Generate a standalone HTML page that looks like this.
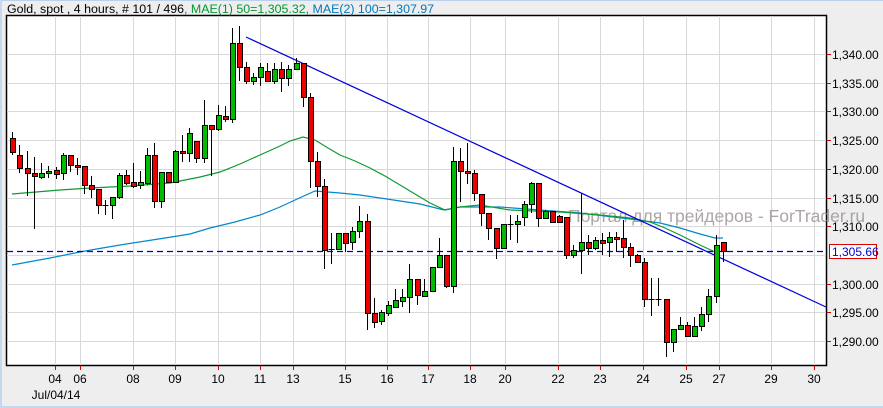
<!DOCTYPE html>
<html><head><meta charset="utf-8"><style>
html,body{margin:0;padding:0;width:883px;height:408px;overflow:hidden;background:#eeeeee;font-family:"Liberation Sans",Arial,sans-serif;}
#wrap{position:relative;width:883px;height:408px;}
svg{position:absolute;left:0;top:0}
</style></head><body><div id="wrap">
<svg width="883" height="408" xmlns="http://www.w3.org/2000/svg" font-family="Liberation Sans, Arial, sans-serif">
<rect x="0" y="0" width="883" height="408" fill="#eeeeee"/>
<rect x="0" y="0" width="883" height="1" fill="#b9d1ea"/>
<rect x="0" y="0" width="2" height="408" fill="#c4d8ee"/>
<rect x="0" y="406" width="883" height="2" fill="#c4d8ee"/>
<rect x="6.5" y="15.5" width="820" height="350" fill="#fff" stroke="#000" stroke-width="1.5"/>
<g stroke="#d8d8d8" stroke-width="1" id="grid">
<line x1="7" x2="826" y1="54.5" y2="54.5"/><line x1="7" x2="826" y1="83.5" y2="83.5"/><line x1="7" x2="826" y1="111.5" y2="111.5"/><line x1="7" x2="826" y1="140.5" y2="140.5"/><line x1="7" x2="826" y1="169.5" y2="169.5"/><line x1="7" x2="826" y1="198.5" y2="198.5"/><line x1="7" x2="826" y1="226.5" y2="226.5"/><line x1="7" x2="826" y1="255.5" y2="255.5"/><line x1="7" x2="826" y1="284.5" y2="284.5"/><line x1="7" x2="826" y1="312.5" y2="312.5"/><line x1="7" x2="826" y1="341.5" y2="341.5"/>
<line y1="16" y2="365" x1="55.5" x2="55.5"/><line y1="16" y2="365" x1="80.5" x2="80.5"/><line y1="16" y2="365" x1="133.5" x2="133.5"/><line y1="16" y2="365" x1="175.5" x2="175.5"/><line y1="16" y2="365" x1="218.5" x2="218.5"/><line y1="16" y2="365" x1="260.5" x2="260.5"/><line y1="16" y2="365" x1="293.5" x2="293.5"/><line y1="16" y2="365" x1="345.5" x2="345.5"/><line y1="16" y2="365" x1="387.5" x2="387.5"/><line y1="16" y2="365" x1="428.5" x2="428.5"/><line y1="16" y2="365" x1="470.5" x2="470.5"/><line y1="16" y2="365" x1="505.5" x2="505.5"/><line y1="16" y2="365" x1="558.5" x2="558.5"/><line y1="16" y2="365" x1="600.5" x2="600.5"/><line y1="16" y2="365" x1="643.5" x2="643.5"/><line y1="16" y2="365" x1="686.5" x2="686.5"/><line y1="16" y2="365" x1="719.5" x2="719.5"/><line y1="16" y2="365" x1="771.5" x2="771.5"/><line y1="16" y2="365" x1="814.5" x2="814.5"/>
</g>
<text x="568" y="222" font-size="17.5" fill="#9a8f8f" fill-opacity="0.8">Портал для трейдеров - ForTrader.ru</text>
<polyline fill="none" stroke="#0088cc" stroke-width="1.2" points="12,265 50,258 85,251 120,245 165,238 190,234 210,228 235,222 260,215 280,207 295,200 315,191 340,193 360,195 380,198 400,201 420,204 444,210 460,207 500,207 540,210 580,213 630,219 660,223 680,228 700,234 715,238 723,238"/>
<polyline fill="none" stroke="#119933" stroke-width="1.2" points="12,194 60,190 90,188 130,186 170,183 200,177 220,172 240,164 260,155 280,146 290,141 303,137 315,140 328,148 340,155 355,161 370,168 385,176 400,185 415,194 430,203 445,210 460,207 480,205 510,210 560,212 600,215 630,218 650,222 665,228 680,235 700,245 715,252"/>
<line x1="246" y1="37" x2="826" y2="307" stroke="#0000dd" stroke-width="1.2"/>
<line x1="7" y1="251.5" x2="826" y2="251.5" stroke="#0000cc" stroke-width="1.3" stroke-dasharray="6,4"/>
<g id="candles" stroke="#000" stroke-width="1"></g>
<g fill="#000" font-size="12.4">
<text x="7" y="13">Gold, spot , 4 hours, # 101 / 496<tspan fill="#009933">, MAE(1) 50=1,305.32</tspan><tspan fill="#0077bb">, MAE(2) 100=1,307.97</tspan></text>
</g>
<g stroke="#dd0000" stroke-width="1">
<line x1="827" x2="831" y1="54.5" y2="54.5"/><line x1="827" x2="831" y1="83.5" y2="83.5"/><line x1="827" x2="831" y1="111.5" y2="111.5"/><line x1="827" x2="831" y1="140.5" y2="140.5"/><line x1="827" x2="831" y1="169.5" y2="169.5"/><line x1="827" x2="831" y1="198.5" y2="198.5"/><line x1="827" x2="831" y1="226.5" y2="226.5"/><line x1="827" x2="831" y1="284.5" y2="284.5"/><line x1="827" x2="831" y1="312.5" y2="312.5"/><line x1="827" x2="831" y1="341.5" y2="341.5"/>
<line y1="366" y2="370" x1="55.5" x2="55.5"/><line y1="366" y2="370" x1="80.5" x2="80.5"/><line y1="366" y2="370" x1="133.5" x2="133.5"/><line y1="366" y2="370" x1="175.5" x2="175.5"/><line y1="366" y2="370" x1="218.5" x2="218.5"/><line y1="366" y2="370" x1="260.5" x2="260.5"/><line y1="366" y2="370" x1="293.5" x2="293.5"/><line y1="366" y2="370" x1="345.5" x2="345.5"/><line y1="366" y2="370" x1="387.5" x2="387.5"/><line y1="366" y2="370" x1="428.5" x2="428.5"/><line y1="366" y2="370" x1="470.5" x2="470.5"/><line y1="366" y2="370" x1="505.5" x2="505.5"/><line y1="366" y2="370" x1="558.5" x2="558.5"/><line y1="366" y2="370" x1="600.5" x2="600.5"/><line y1="366" y2="370" x1="643.5" x2="643.5"/><line y1="366" y2="370" x1="686.5" x2="686.5"/><line y1="366" y2="370" x1="719.5" x2="719.5"/><line y1="366" y2="370" x1="771.5" x2="771.5"/><line y1="366" y2="370" x1="814.5" x2="814.5"/>
</g>
<g fill="#000" font-size="12">
<text x="832" y="59">1,340.00</text><text x="832" y="88">1,335.00</text><text x="832" y="116">1,330.00</text><text x="832" y="145">1,325.00</text><text x="832" y="174">1,320.00</text><text x="832" y="203">1,315.00</text><text x="832" y="231">1,310.00</text><text x="832" y="289">1,300.00</text><text x="832" y="317">1,295.00</text><text x="832" y="346">1,290.00</text>
</g>
<rect x="829.5" y="244.5" width="47" height="14" fill="#fff" stroke="#dd0000"/>
<text x="832" y="256" font-size="12" fill="#0000cc">1,305.66</text>
<g fill="#000" font-size="12" text-anchor="middle">
<text x="55" y="383">04</text><text x="80" y="383">06</text><text x="133" y="383">08</text><text x="175" y="383">09</text><text x="218" y="383">10</text><text x="260" y="383">11</text><text x="293" y="383">13</text><text x="345" y="383">15</text><text x="387" y="383">16</text><text x="428" y="383">17</text><text x="470" y="383">18</text><text x="505" y="383">20</text><text x="558" y="383">22</text><text x="600" y="383">23</text><text x="643" y="383">24</text><text x="686" y="383">25</text><text x="719" y="383">27</text><text x="771" y="383">29</text><text x="814" y="383">30</text>
<text x="56" y="399">Jul/04/14</text>
</g>
</svg>
<script>
var d=[
[12,138,152,132,155,0],[19,155,168,145,173,0],[27,168,173,151,196,0],[34,173,176,157,229,0],[41,173,177,163,179,1],[48,171,173,166,178,1],[56,170,174,167,179,0],[63,155,173,153,180,1],[70,155,165,155,172,0],[77,165,166,158,175,0],[84,166,185,166,194,0],[91,185,189,176,198,0],[98,189,205,189,214,0],
[105,205,205,200,215,2],[112,197,205,197,219,1],[119,175,197,173,199,1],[126,175,183,170,185,0],[133,182,186,163,188,0],[140,182,185,171,189,1],[147,155,183,148,185,1],[154,155,201,143,208,0],[161,172,201,172,208,1],[168,172,182,172,183,0],[175,151,182,150,183,1],[182,151,153,135,162,0],[189,133,153,128,162,1],[196,141,158,141,163,0],[204,125,158,100,163,1],[211,125,129,125,176,0],[218,115,129,105,131,1],[225,116,119,106,122,0],[232,43,119,28,123,1],[239,43,67,26,81,0],[246,67,81,62,84,0],[253,77,81,73,85,1],[260,67,77,63,86,1],[267,71,81,63,82,0],[274,69,81,63,84,1],[281,69,78,62,92,0],[288,69,78,65,86,1],[296,63,69,58,70,1],[303,63,97,63,107,0],[310,97,161,93,188,0],[317,161,186,152,197,0],[324,186,250,179,269,0],[331,249,249,233,264,2],[338,233,249,233,250,1],[345,233,243,233,252,0],[352,231,242,227,250,1],[359,221,231,206,238,1],[367,221,313,214,330,0],[374,313,322,298,328,0],[381,312,321,310,325,1],[388,305,313,301,316,1],[395,300,307,289,308,1],[402,297,301,289,307,1],[409,279,297,264,313,1],[417,279,295,279,305,0],[424,291,296,279,297,1],[432,267,291,267,292,1],[439,255,267,238,267,1],[446,255,286,255,288,0],[453,161,286,147,293,1],[460,161,171,148,202,0],[467,171,173,143,184,0],[474,173,193,170,201,0],[481,194,213,194,226,0],[488,213,228,213,240,0],[496,228,248,228,259,0],[503,224,248,224,249,1],[510,224,224,215,240,2],[517,221,224,215,243,1],[524,204,217,201,226,1],[531,183,204,182,213,1],[538,183,218,183,227,0],[545,211,218,210,219,1],[552,211,222,211,223,0],[559,216,222,215,223,0],[566,217,255,217,259,0],[573,250,255,245,258,1],[581,242,250,193,274,1],[588,242,248,235,255,0],[595,240,248,237,250,1],[602,240,243,233,255,0],[609,237,242,232,257,1],[616,237,239,232,252,0],[623,238,247,220,258,0],[630,247,255,243,267,0],[637,255,262,254,263,0],[644,262,299,258,307,0],[651,299,299,278,316,2],[658,299,299,278,306,2],[666,299,342,299,357,0],[673,329,342,329,352,1],[680,325,329,317,330,1],[687,325,336,322,337,0],[694,326,336,317,337,1],[701,314,326,307,331,1],[708,296,314,289,322,1],[716,245,296,235,303,1],[723,242,251,242,262,0]];
var g=document.getElementById('candles'),s='';
d.forEach(function(c){var x=c[0]+0.5;s+='<line x1="'+x+'" x2="'+x+'" y1="'+c[3]+'" y2="'+c[4]+'"/>';
if(c[5]==2){s+='<line x1="'+(x-3)+'" x2="'+(x+3)+'" y1="'+(c[1]+0.5)+'" y2="'+(c[1]+0.5)+'"/>';}
else{var h=Math.max(c[2]-c[1],2);s+='<rect x="'+(c[0]-2)+'.5" y="'+(c[1]+0.5)+'" width="5" height="'+h+'" fill="'+(c[5]?'#00bb00':'#ee0000')+'"/>';}});
g.innerHTML=s;
</script>
</div></body></html>
